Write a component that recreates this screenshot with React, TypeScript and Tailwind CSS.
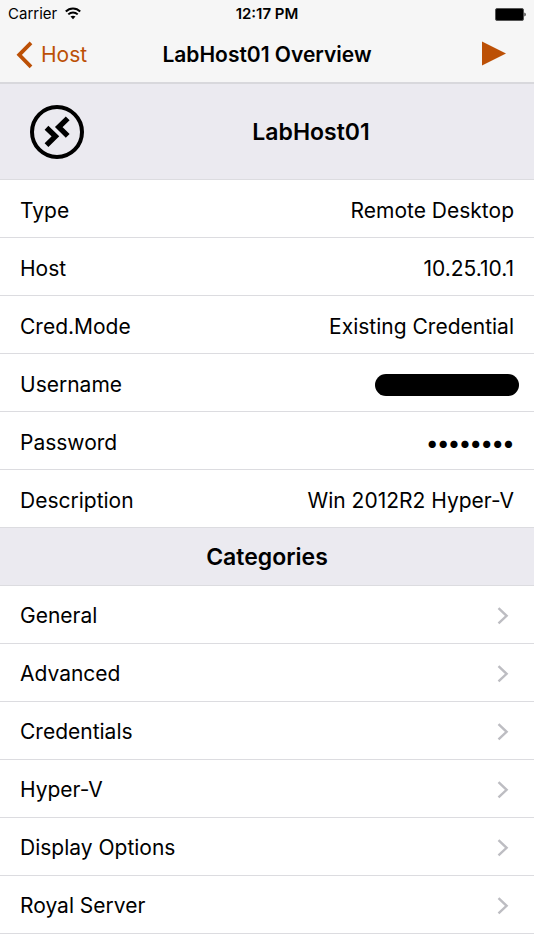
type Detail = {
  label: string;
  value?: string;
  masked?: boolean;
};

const details: Detail[] = [
  { label: 'Type', value: 'Remote Desktop' },
  { label: 'Host', value: '10.25.10.1' },
  { label: 'Cred.Mode', value: 'Existing Credential' },
  { label: 'Username' },
  { label: 'Password', value: '••••••••', masked: true },
  { label: 'Description', value: 'Win 2012R2 Hyper-V' },
];

const categories = ['General', 'Advanced', 'Credentials', 'Hyper-V', 'Display Options', 'Royal Server'];

export default function App() {
  return (
    <div className="min-h-screen bg-white text-black text-[21px] leading-7 font-['Inter','Liberation_Sans',sans-serif]">
      <header className="bg-[#f6f6f6] border-b-2 border-[#d8d8dc]">
        <StatusBar />
        <nav className="grid grid-cols-[1fr_auto_1fr] items-center h-[54px] px-4">
          <a href="#host" className="flex items-center gap-2 text-[#bc5006]">
            <BackIcon />
            Host
          </a>
          <h1 className="font-semibold">LabHost01 Overview</h1>
          <button type="button" aria-label="Connect" className="justify-self-end mr-3">
            <PlayIcon />
          </button>
        </nav>
      </header>

      <main>
        {/* Connection */}
        <section className="flex items-center gap-6 h-24 pl-[30px] pr-5 bg-[#ebeaf0] border-b border-[#dcdce0]">
          <RemoteDesktopIcon />
          <h2 className="flex-1 text-center text-[23px] font-semibold">LabHost01</h2>
        </section>

        <dl>
          {details.map((d) => (
            <div key={d.label} className="flex items-center justify-between h-[58px] px-5 pt-1 border-b border-[#dcdce0]">
              <dt>{d.label}</dt>
              <dd className={d.masked ? 'text-[23px] font-bold' : ''}>{d.value ?? <Redacted />}</dd>
            </div>
          ))}
        </dl>

        {/* Categories */}
        <h2 className="flex items-center justify-center h-[58px] bg-[#ebeaf0] border-b border-[#dcdce0] text-[23px] font-semibold">
          Categories
        </h2>
        <ul>
          {categories.map((name) => (
            <li key={name}>
              <a href="#category" className="flex items-center justify-between h-[58px] pl-5 pr-6 pt-0.5 border-b border-[#dcdce0]">
                {name}
                <ChevronIcon />
              </a>
            </li>
          ))}
        </ul>
      </main>
    </div>
  );
}

function StatusBar() {
  return (
    <div className="grid grid-cols-[1fr_auto_1fr] items-center h-7 px-2 text-[15px] leading-5">
      <div className="flex items-center gap-2">
        <span>Carrier</span>
        <WifiIcon />
      </div>
      <span className="font-semibold">12:17 PM</span>
      <div className="justify-self-end">
        <BatteryIcon />
      </div>
    </div>
  );
}

function Redacted() {
  return <span className="block w-36 h-[22px] -mr-[5px] rounded-full bg-black" />;
}

function WifiIcon() {
  return (
    <svg width="16" height="14" viewBox="0 0 16 14" fill="none" stroke="currentColor" strokeWidth="2">
      <path d="M0.8 4.5C4.8 0.4 11.2 0.4 15.2 4.5" />
      <path d="M3.3 7.4C6 4.8 10 4.8 12.7 7.4" />
      <path d="M5.5 9.6C7 8.3 9 8.3 10.5 9.6L8 12.2Z" fill="currentColor" stroke="none" />
    </svg>
  );
}

function BatteryIcon() {
  return (
    <svg width="31" height="13" viewBox="0 0 31 13">
      <rect x="0.5" y="0.5" width="28" height="12" rx="1.5" fill="#000" stroke="#555" />
      <path d="M29.5 4.5C31 5 31 8 29.5 8.5Z" fill="#000" />
    </svg>
  );
}

function BackIcon() {
  return (
    <svg width="17" height="28" viewBox="0 0 17 28" fill="none" stroke="currentColor" strokeWidth="3.8">
      <path d="M15 1.8L3.2 13.8L15 25.8" />
    </svg>
  );
}

function PlayIcon() {
  return (
    <svg width="24" height="28" viewBox="0 0 24 28" fill="#bc5006">
      <path d="M0 0.5L24 12.5L0 24.5Z" />
    </svg>
  );
}

function RemoteDesktopIcon() {
  return (
    <svg width="54" height="54" viewBox="0 0 54 54" fill="none" stroke="#000">
      <circle cx="27" cy="27" r="25" strokeWidth="4" />
      <g strokeWidth="5.4">
        <path d="M16.5 22.7L25.4 31.3L16.5 40.1" />
        <path d="M37.7 13.3L28.8 22.1L37.7 30.9" />
      </g>
    </svg>
  );
}

function ChevronIcon() {
  return (
    <svg width="13" height="18" viewBox="0 0 13 18" fill="none" stroke="#bdbdc2" strokeWidth="2.4">
      <path d="M1.5 1.2L9.6 8.8L1.5 16.4" />
    </svg>
  );
}
